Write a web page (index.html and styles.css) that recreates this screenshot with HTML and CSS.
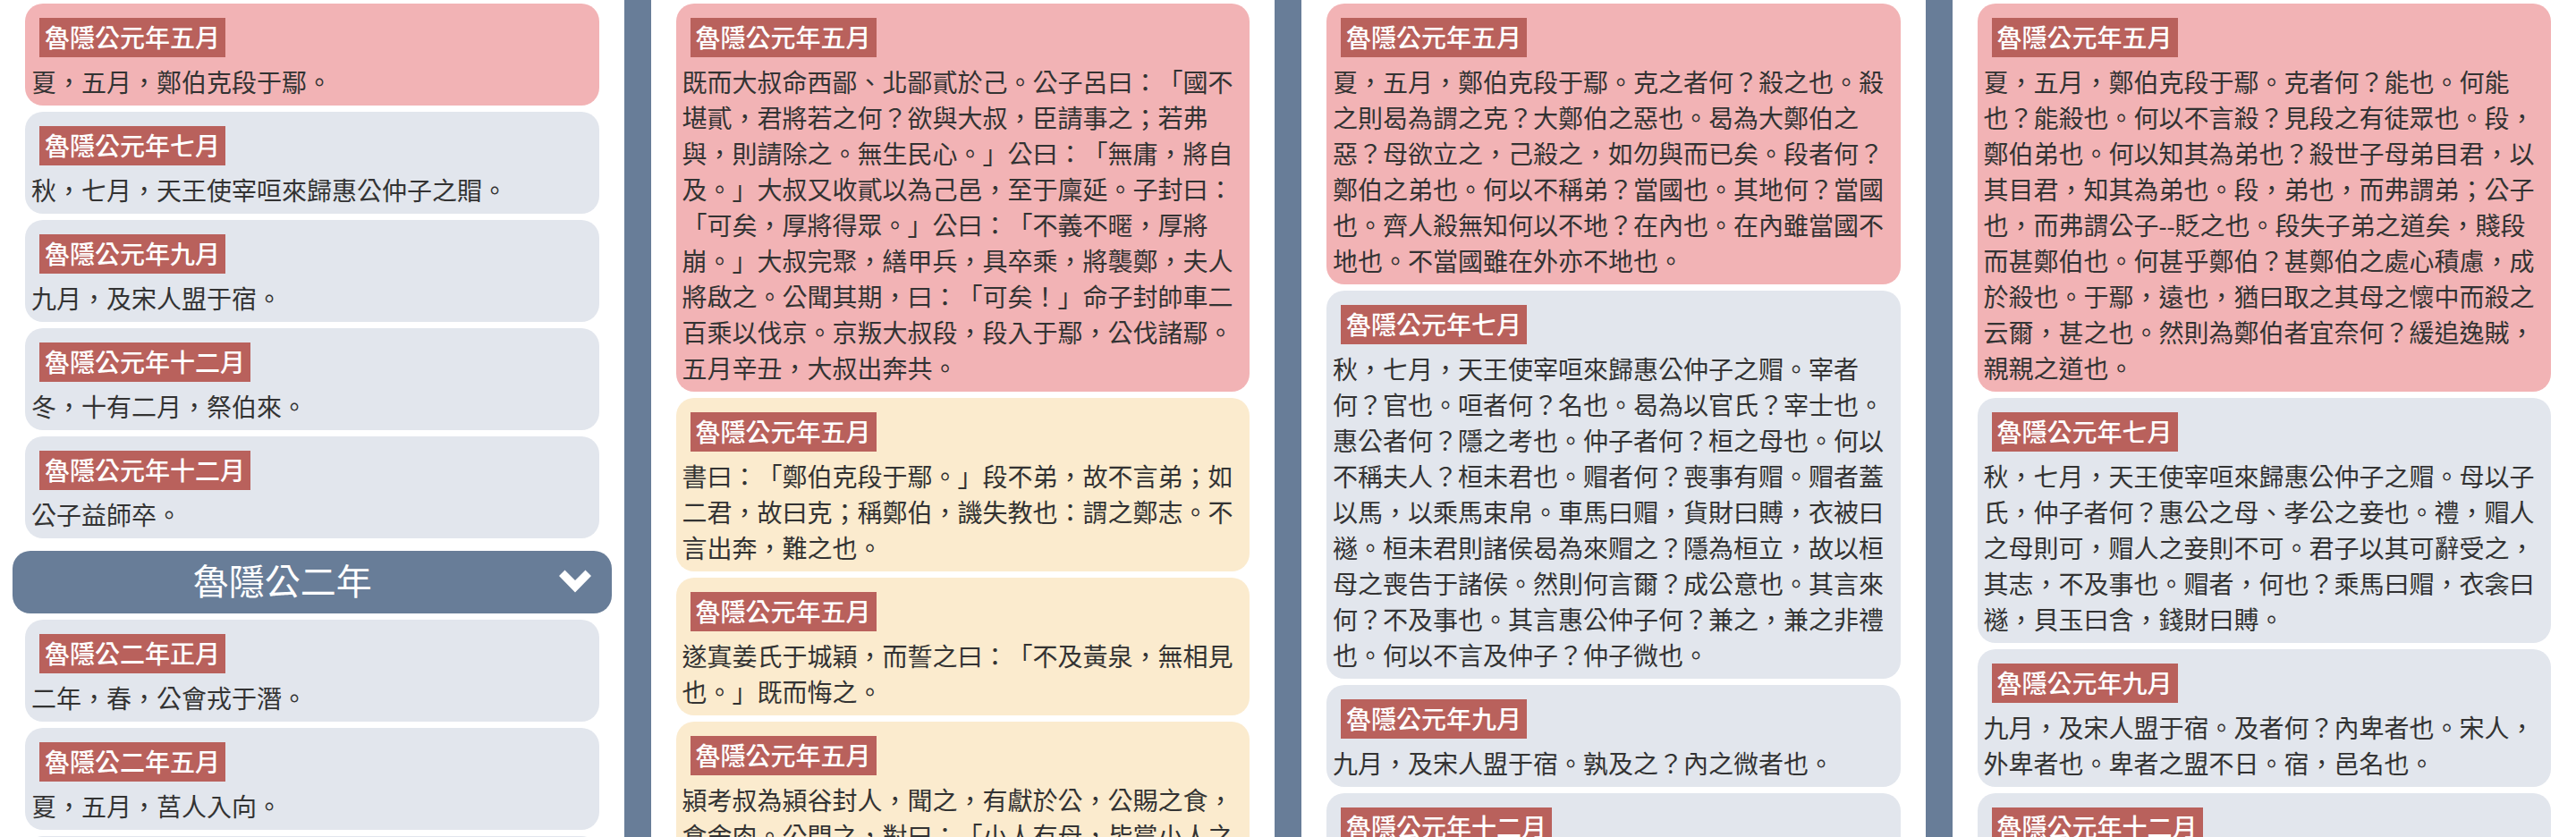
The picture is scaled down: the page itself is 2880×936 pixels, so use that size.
FILE: index.html
```html
<!DOCTYPE html>
<html lang="zh-Hant">
<head>
<meta charset="utf-8">
<meta name="viewport" content="width=device-width, initial-scale=1">
<title>春秋三傳對照</title>
<link rel="stylesheet" href="styles.css">
</head>
<body>
<main class="columns">
  <section class="column">
    <article class="entry entry-active">
      <h3 class="date">魯隱公元年五月</h3>
      <p class="text">夏，五月，鄭伯克段于鄢。</p>
    </article>
    <article class="entry">
      <h3 class="date">魯隱公元年七月</h3>
      <p class="text">秋，七月，天王使宰咺來歸惠公仲子之賵。</p>
    </article>
    <article class="entry">
      <h3 class="date">魯隱公元年九月</h3>
      <p class="text">九月，及宋人盟于宿。</p>
    </article>
    <article class="entry">
      <h3 class="date">魯隱公元年十二月</h3>
      <p class="text">冬，十有二月，祭伯來。</p>
    </article>
    <article class="entry">
      <h3 class="date">魯隱公元年十二月</h3>
      <p class="text">公子益師卒。</p>
    </article>
    <button class="year" type="button" aria-expanded="true">
      <span class="year-name">魯隱公二年</span>
      <svg class="chevron" viewBox="0 0 38 26" aria-hidden="true"><path d="M1 7 7.500.5 19 12 30.500.5 37 7 19 25.500z"/></svg>
    </button>
    <article class="entry">
      <h3 class="date">魯隱公二年正月</h3>
      <p class="text">二年，春，公會戎于潛。</p>
    </article>
    <article class="entry">
      <h3 class="date">魯隱公二年五月</h3>
      <p class="text">夏，五月，莒人入向。</p>
    </article>
    <article class="entry"></article>
  </section>

  <section class="column">
    <article class="entry entry-active">
      <h3 class="date">魯隱公元年五月</h3>
      <p class="text">既而大叔命西鄙、北鄙貳於己。公子呂曰：「國不堪貳，君將若之何？欲與大叔，臣請事之；若弗與，則請除之。無生民心。」公曰：「無庸，將自及。」大叔又收貳以為己邑，至于廩延。子封曰：「可矣，厚將得眾。」公曰：「不義不暱，厚將崩。」大叔完聚，繕甲兵，具卒乘，將襲鄭，夫人將啟之。公聞其期，曰：「可矣！」命子封帥車二百乘以伐京。京叛大叔段，段入于鄢，公伐諸鄢。五月辛丑，大叔出奔共。</p>
    </article>
    <article class="entry entry-related">
      <h3 class="date">魯隱公元年五月</h3>
      <p class="text">書曰：「鄭伯克段于鄢。」段不弟，故不言弟；如二君，故曰克；稱鄭伯，譏失教也：謂之鄭志。不言出奔，難之也。</p>
    </article>
    <article class="entry entry-related">
      <h3 class="date">魯隱公元年五月</h3>
      <p class="text">遂寘姜氏于城穎，而誓之曰：「不及黃泉，無相見也。」既而悔之。</p>
    </article>
    <article class="entry entry-related">
      <h3 class="date">魯隱公元年五月</h3>
      <p class="text">潁考叔為潁谷封人，聞之，有獻於公，公賜之食，食舍肉。公問之，對曰：「小人有母，皆嘗小人之</p>
    </article>
  </section>

  <section class="column">
    <article class="entry entry-active">
      <h3 class="date">魯隱公元年五月</h3>
      <p class="text">夏，五月，鄭伯克段于鄢。克之者何？殺之也。殺之則曷為謂之克？大鄭伯之惡也。曷為大鄭伯之惡？母欲立之，己殺之，如勿與而已矣。段者何？鄭伯之弟也。何以不稱弟？當國也。其地何？當國也。齊人殺無知何以不地？在內也。在內雖當國不地也。不當國雖在外亦不地也。</p>
    </article>
    <article class="entry">
      <h3 class="date">魯隱公元年七月</h3>
      <p class="text">秋，七月，天王使宰咺來歸惠公仲子之赗。宰者何？官也。咺者何？名也。曷為以官氏？宰士也。惠公者何？隱之考也。仲子者何？桓之母也。何以不稱夫人？桓未君也。赗者何？喪事有赗。赗者蓋以馬，以乘馬束帛。車馬曰赗，貨財曰賻，衣被曰襚。桓未君則諸侯曷為來赗之？隱為桓立，故以桓母之喪告于諸侯。然則何言爾？成公意也。其言來何？不及事也。其言惠公仲子何？兼之，兼之非禮也。何以不言及仲子？仲子微也。</p>
    </article>
    <article class="entry">
      <h3 class="date">魯隱公元年九月</h3>
      <p class="text">九月，及宋人盟于宿。孰及之？內之微者也。</p>
    </article>
    <article class="entry">
      <h3 class="date">魯隱公元年十二月</h3>
    </article>
  </section>

  <section class="column">
    <article class="entry entry-active">
      <h3 class="date">魯隱公元年五月</h3>
      <p class="text">夏，五月，鄭伯克段于鄢。克者何？能也。何能也？能殺也。何以不言殺？見段之有徒眾也。段，鄭伯弟也。何以知其為弟也？殺世子母弟目君，以其目君，知其為弟也。段，弟也，而弗謂弟；公子也，而弗謂公子--貶之也。段失子弟之道矣，賤段而甚鄭伯也。何甚乎鄭伯？甚鄭伯之處心積慮，成於殺也。于鄢，遠也，猶曰取之其母之懷中而殺之云爾，甚之也。然則為鄭伯者宜奈何？緩追逸賊，親親之道也。</p>
    </article>
    <article class="entry">
      <h3 class="date">魯隱公元年七月</h3>
      <p class="text">秋，七月，天王使宰咺來歸惠公仲子之赗。母以子氏，仲子者何？惠公之母、孝公之妾也。禮，赗人之母則可，赗人之妾則不可。君子以其可辭受之，其志，不及事也。赗者，何也？乘馬曰赗，衣衾曰襚，貝玉曰含，錢財曰賻。</p>
    </article>
    <article class="entry">
      <h3 class="date">魯隱公元年九月</h3>
      <p class="text">九月，及宋人盟于宿。及者何？內卑者也。宋人，外卑者也。卑者之盟不日。宿，邑名也。</p>
    </article>
    <article class="entry">
      <h3 class="date">魯隱公元年十二月</h3>
    </article>
  </section>
</main>
</body>
</html>
```

FILE: styles.css
```css
* {
  box-sizing: border-box;
}

body {
  margin: 0;
  color: #333;
  font-family: "Noto Sans", "Noto Sans CJK TC", sans-serif;
  font-size: 28px;
  line-height: 40px;
  text-spacing-trim: space-all;
}

/* The gap between the columns shows the slate background */
.columns {
  display: grid;
  grid-template-columns: repeat(4, 1fr);
  gap: 30px;
  height: 100vh;
  overflow: hidden;
  background: #687d98;
}

.column {
  display: flex;
  flex-direction: column;
  gap: 7px;
  min-width: 0;
  min-height: 0;
  padding: 4px 28px 0;
  overflow: hidden;
  background: #fff;
}

.entry {
  flex: none;
  min-height: 114px;
  padding: 16px 7px 6px;
  border-radius: 20px;
  background: #e2e6ed;
}

.entry-active {
  background: #f2b3b5;
}

.entry-related {
  background: #fbebce;
}

.date {
  width: fit-content;
  margin: 0 0 8px 9px;
  padding: 2px 6px;
  background: #b9615c;
  color: #fff;
  font-size: 28px;
  font-weight: 500;
}

.text {
  margin: 0;
}

.year {
  display: flex;
  flex: none;
  align-items: center;
  margin: 7px -14px 0;
  padding: 9px 22px 11px 14px;
  border: 0;
  border-radius: 20px;
  background: #687d98;
  color: #fff;
  font: inherit;
  font-size: 40px;
  line-height: 50px;
}

.year-name {
  flex: 1;
  padding-right: 20px;
  text-align: center;
}

.chevron {
  width: 38px;
  height: 26px;
  fill: currentColor;
}
```
